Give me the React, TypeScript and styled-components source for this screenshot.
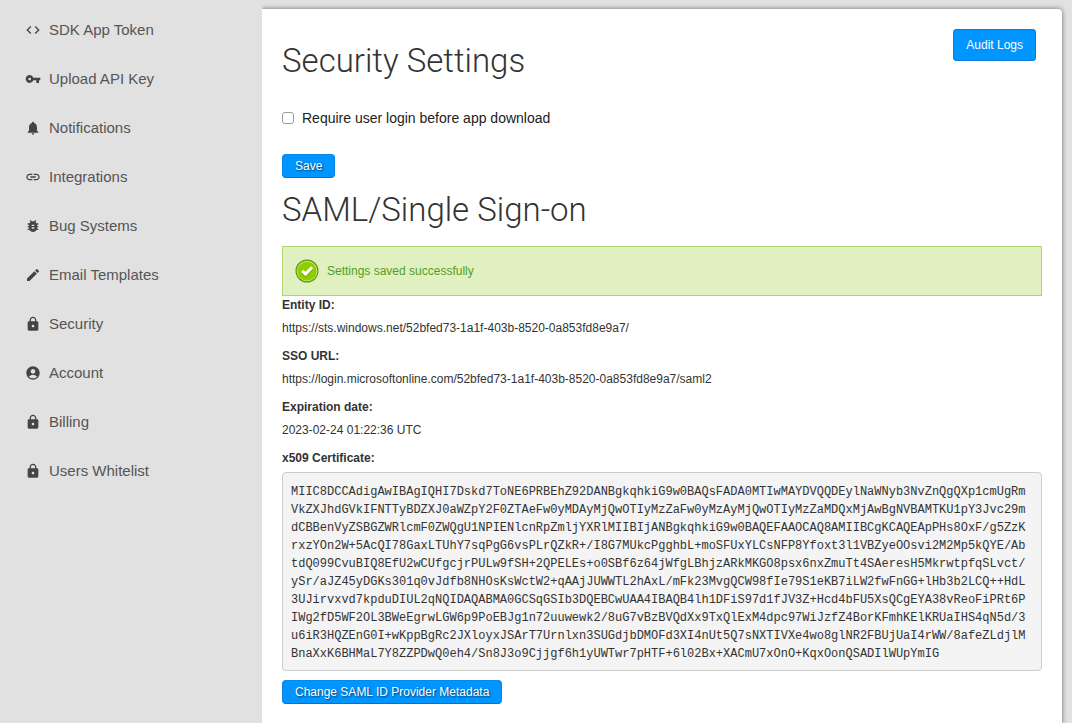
import React from "react";
import styled, { createGlobalStyle } from "styled-components";
import type { IconType } from "react-icons";
import {
  MdAccountCircle,
  MdBugReport,
  MdCode,
  MdEdit,
  MdLink,
  MdLock,
  MdNotifications,
  MdVpnKey,
} from "react-icons/md";

const GlobalStyle = createGlobalStyle`
  *, *::before, *::after { box-sizing: border-box; }
  body {
    margin: 0;
    background: #e1e1e1;
    color: #333;
    font: 12px/18px "Liberation Sans", Arial, sans-serif;
  }
`;

const Page = styled.div`
  display: flex;
  min-height: 100vh;
`;

const Sidebar = styled.nav`
  position: relative;
  z-index: 1;
  flex: 0 0 262px;
  padding-top: 5px;
  background: #e1e1e1;
`;

const NavList = styled.ul`
  margin: 0;
  padding: 0;
  list-style: none;
`;

const NavLink = styled.a`
  display: flex;
  align-items: center;
  gap: 8px;
  height: 49px;
  padding-left: 25px;
  color: #555;
  font-size: 15px;
  line-height: 20px;
  text-decoration: none;

  svg {
    color: #444;
  }
`;

const Panel = styled.main`
  flex: 1;
  min-width: 0;
  margin: 9px 10px 0 0;
  padding: 20px;
  background: #fff;
  border-top-right-radius: 4px;
  box-shadow: 0 0 5px rgba(0, 0, 0, 0.55);
`;

const PanelHeader = styled.header`
  display: flex;
  align-items: flex-start;
  justify-content: space-between;
  padding-right: 6px;
`;

const Title = styled.h1`
  margin: 12px 0 0;
  font-family: Roboto, "Liberation Sans", sans-serif;
  font-size: 33px;
  font-weight: 300;
  line-height: 40px;
`;

const SectionTitle = styled(Title).attrs({ as: "h2" })`
  margin: 12px 0 16px;
`;

const AuditButton = styled.button`
  height: 32px;
  padding: 0 12px;
  border: 1px solid #0a7bdc;
  border-radius: 3px;
  background: #0095ff;
  color: #fff;
  font: 12px/18px "Liberation Sans", Arial, sans-serif;
`;

const ActionButton = styled.button`
  display: block;
  height: 24px;
  padding: 0 12px;
  border: 1px solid #0a86e6;
  border-bottom-color: #0873c6;
  border-radius: 4px;
  background: #0095ff;
  color: #fff;
  font: 12px/18px "Liberation Sans", Arial, sans-serif;
  text-shadow: 1px 1px 2px rgba(0, 0, 0, 0.6);
`;

const CheckRow = styled.label`
  display: flex;
  align-items: center;
  gap: 8px;
  margin: 27px 0 26px;
  font-size: 14px;
  line-height: 20px;
  color: #222;
`;

const Checkbox = styled.input`
  appearance: none;
  width: 12px;
  height: 12px;
  margin: 0;
  border: 1px solid #999;
  border-radius: 3px;
  background: #fff;

  &:checked {
    background: #0095ff;
  }
`;

const Notice = styled.div`
  display: flex;
  align-items: center;
  gap: 8px;
  height: 50px;
  padding: 0 12px;
  border: 1px solid #b0d56a;
  background: #e1f0c0;
  color: #529f1c;
`;

const Details = styled.dl`
  margin: 0 0 9px;
`;

const Term = styled.dt`
  margin-bottom: 5px;
  font-weight: bold;
`;

const Value = styled.dd`
  margin: 0 0 10px;
  overflow-wrap: anywhere;

  &:last-child {
    margin-bottom: 0;
  }
`;

const Certificate = styled.pre`
  margin: 0;
  padding: 10px 12px 7px 8px;
  border: 1px solid #ccc;
  border-radius: 4px;
  background: #f4f4f4;
  font: 12px/18px "Liberation Mono", "Courier New", monospace;
  white-space: pre-wrap;
  word-break: break-all;
`;

const navItems: { label: string; Icon: IconType }[] = [
  { label: "SDK App Token", Icon: MdCode },
  { label: "Upload API Key", Icon: MdVpnKey },
  { label: "Notifications", Icon: MdNotifications },
  { label: "Integrations", Icon: MdLink },
  { label: "Bug Systems", Icon: MdBugReport },
  { label: "Email Templates", Icon: MdEdit },
  { label: "Security", Icon: MdLock },
  { label: "Account", Icon: MdAccountCircle },
  { label: "Billing", Icon: MdLock },
  { label: "Users Whitelist", Icon: MdLock },
];

const certificate = [
  "MIIC8DCCAdigAwIBAgIQHI7Dskd7ToNE6PRBEhZ92DANBgkqhkiG9w0BAQsFADA0MTIwMAYDVQQDEylNaWNyb3NvZnQgQXp1cmUgRm",
  "VkZXJhdGVkIFNTTyBDZXJ0aWZpY2F0ZTAeFw0yMDAyMjQwOTIyMzZaFw0yMzAyMjQwOTIyMzZaMDQxMjAwBgNVBAMTKU1pY3Jvc29m",
  "dCBBenVyZSBGZWRlcmF0ZWQgU1NPIENlcnRpZmljYXRlMIIBIjANBgkqhkiG9w0BAQEFAAOCAQ8AMIIBCgKCAQEApPHs8OxF/g5ZzK",
  "rxzYOn2W+5AcQI78GaxLTUhY7sqPgG6vsPLrQZkR+/I8G7MUkcPgghbL+moSFUxYLCsNFP8Yfoxt3l1VBZyeOOsvi2M2Mp5kQYE/Ab",
  "tdQ099CvuBIQ8EfU2wCUfgcjrPULw9fSH+2QPELEs+o0SBf6z64jWfgLBhjzARkMKGO8psx6nxZmuTt4SAeresH5MkrwtpfqSLvct/",
  "ySr/aJZ45yDGKs301q0vJdfb8NHOsKsWctW2+qAAjJUWWTL2hAxL/mFk23MvgQCW98fIe79S1eKB7iLW2fwFnGG+lHb3b2LCQ++HdL",
  "3UJirvxvd7kpduDIUL2qNQIDAQABMA0GCSqGSIb3DQEBCwUAA4IBAQB4lh1DFiS97d1fJV3Z+Hcd4bFU5XsQCgEYA38vReoFiPRt6P",
  "IWg2fD5WF2OL3BWeEgrwLGW6p9PoEBJg1n72uuwewk2/8uG7vBzBVQdXx9TxQlExM4dpc97WiJzfZ4BorKFmhKElKRUaIHS4qN5d/3",
  "u6iR3HQZEnG0I+wKppBgRc2JXloyxJSArT7Urnlxn3SUGdjbDMOFd3XI4nUt5Q7sNXTIVXe4wo8glNR2FBUjUaI4rWW/8afeZLdjlM",
  "BnaXxK6BHMaL7Y8ZZPDwQ0eh4/Sn8J3o9Cjjgf6h1yUWTwr7pHTF+6l02Bx+XACmU7xOnO+KqxOonQSADIlWUpYmIG",
].join("");

function SuccessIcon() {
  return (
    <svg width="24" height="24" viewBox="0 0 25 25" aria-hidden="true">
      <circle cx="12.5" cy="12.5" r="12" fill="#5b9a12" />
      <circle cx="12.5" cy="12.5" r="10.8" fill="#c5e86a" />
      <circle cx="12.5" cy="12.7" r="9.8" fill="#8fcc00" />
      <path
        d="M7.8 12.9l3.4 3.4 6.6-7.3"
        transform="translate(0 .9)"
        fill="none"
        stroke="#6fa50a"
        strokeWidth="3"
      />
      <path d="M7.5 12.4l3.5 3.4 6.8-7.2" fill="none" stroke="#fff" strokeWidth="3.2" />
    </svg>
  );
}

export default function App() {
  return (
    <>
      <GlobalStyle />
      <Page>
        <Sidebar aria-label="Settings">
          <NavList>
            {navItems.map(({ label, Icon }) => (
              <li key={label}>
                <NavLink href="#">
                  <Icon size={16} aria-hidden="true" />
                  {label}
                </NavLink>
              </li>
            ))}
          </NavList>
        </Sidebar>
        <Panel>
          <PanelHeader>
            <Title>Security Settings</Title>
            <AuditButton type="button">Audit Logs</AuditButton>
          </PanelHeader>
          <CheckRow htmlFor="require-login">
            <Checkbox type="checkbox" id="require-login" />
            Require user login before app download
          </CheckRow>
          <ActionButton type="button">Save</ActionButton>
          <SectionTitle>SAML/Single Sign-on</SectionTitle>
          <Notice role="status">
            <SuccessIcon />
            Settings saved successfully
          </Notice>
          <Details>
            <Term>Entity ID:</Term>
            <Value>https://sts.windows.net/52bfed73-1a1f-403b-8520-0a853fd8e9a7/</Value>
            <Term>SSO URL:</Term>
            <Value>https://login.microsoftonline.com/52bfed73-1a1f-403b-8520-0a853fd8e9a7/saml2</Value>
            <Term>Expiration date:</Term>
            <Value>2023-02-24 01:22:36 UTC</Value>
            <Term>x509 Certificate:</Term>
            <Value>
              <Certificate>{certificate}</Certificate>
            </Value>
          </Details>
          <ActionButton type="button">Change SAML ID Provider Metadata</ActionButton>
        </Panel>
      </Page>
    </>
  );
}
